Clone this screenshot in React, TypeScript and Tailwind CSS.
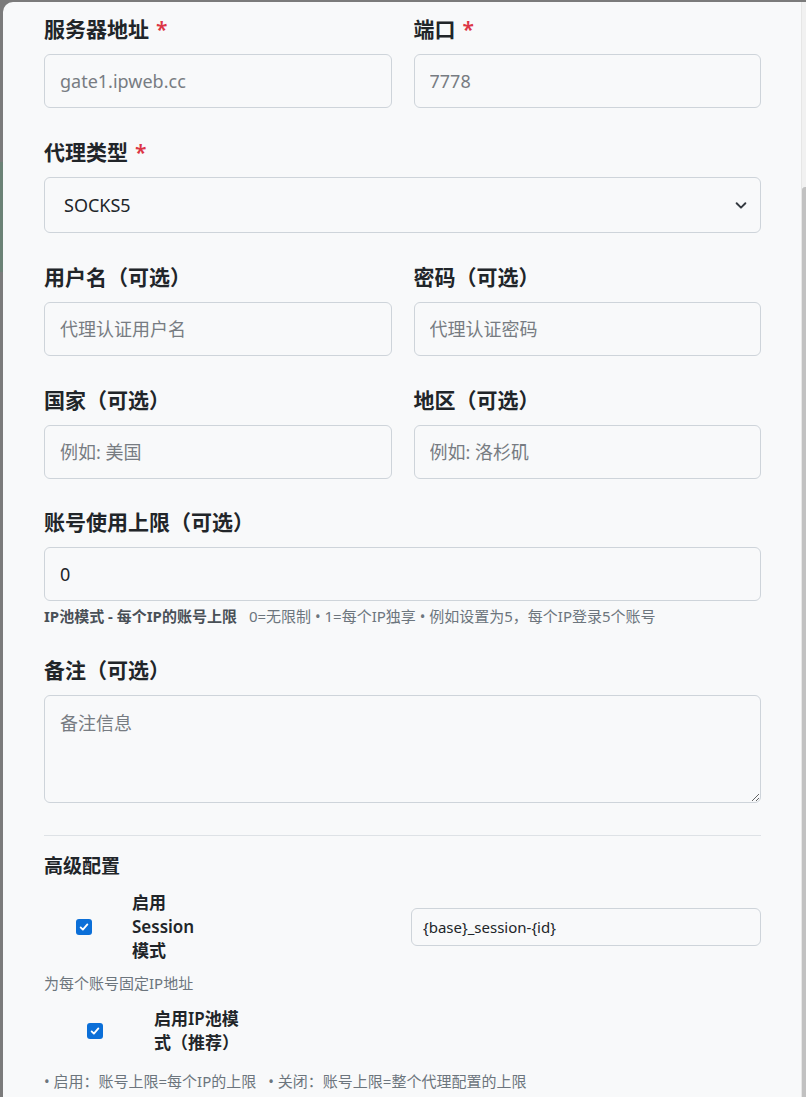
import type { ReactNode } from 'react';

const font = { fontFamily: '"Noto Sans", "Noto Sans CJK SC", sans-serif' };

function Label({ children, required }: { children: ReactNode; required?: boolean }) {
  return (
    <label className="block text-[21px] leading-[30px] font-semibold text-[#212529] mb-[10px]">
      {children}
      {required && <span className="text-[#dc3545] ml-[7px]">*</span>}
    </label>
  );
}

function TextInput({ placeholder, value }: { placeholder?: string; value?: string }) {
  return (
    <input
      type="text"
      placeholder={placeholder}
      defaultValue={value}
      className="block w-full h-[54px] px-[15px] rounded-[6px] border border-[#ced4da] bg-[#f8f9fa] text-[18px] text-[#212529] placeholder:text-[#777c82] outline-none"
    />
  );
}

function Check() {
  return (
    <span className="flex items-center justify-center w-[16px] h-[16px] rounded-[3px] bg-[#0b6fd8] shrink-0">
      <svg viewBox="0 0 16 16" className="w-[12px] h-[12px]" fill="none" stroke="white" strokeWidth={2.4} strokeLinecap="round" strokeLinejoin="round">
        <path d="M3.5 8.5l3 3 6-7" />
      </svg>
    </span>
  );
}

export default function App() {
  return (
    <div className="h-screen overflow-hidden bg-[#7b7b7b] pt-[2px] flex" style={font}>
      <div className="w-[3px] flex flex-col shrink-0">
        <div className="h-[160px]" />
        <div className="h-[110px] bg-[#6b8276]" />
      </div>
      <div className="flex-1 flex bg-[#f8f9fa] rounded-tl-[10px]">
        <div className="flex-1 pl-[41px] pr-[40px] pt-[12px]">
          <div className="grid grid-cols-2 gap-x-[22px]">
            <div>
              <Label required>服务器地址</Label>
              <TextInput placeholder="gate1.ipweb.cc" />
            </div>
            <div>
              <Label required>端口</Label>
              <TextInput placeholder="7778" />
            </div>
          </div>

          <div className="mt-[29px]">
            <Label required>代理类型</Label>
            <div className="relative h-[56px] rounded-[6px] border border-[#ced4da] flex items-center pl-[19px] pr-[12px]">
              <span className="flex-1 text-[18px] text-[#212529]">SOCKS5</span>
              <svg viewBox="0 0 16 16" className="w-[14px] h-[14px]" fill="none" stroke="#343a40" strokeWidth={2.2} strokeLinecap="round" strokeLinejoin="round">
                <path d="M3 6l5 5 5-5" />
              </svg>
            </div>
          </div>

          <div className="grid grid-cols-2 gap-x-[22px] mt-[29px]">
            <div>
              <Label>用户名（可选）</Label>
              <TextInput placeholder="代理认证用户名" />
            </div>
            <div>
              <Label>密码（可选）</Label>
              <TextInput placeholder="代理认证密码" />
            </div>
          </div>

          <div className="grid grid-cols-2 gap-x-[22px] mt-[29px]">
            <div>
              <Label>国家（可选）</Label>
              <TextInput placeholder="例如: 美国" />
            </div>
            <div>
              <Label>地区（可选）</Label>
              <TextInput placeholder="例如: 洛杉矶" />
            </div>
          </div>

          <div className="mt-[28px]">
            <Label>账号使用上限（可选）</Label>
            <TextInput value="0" />
            <p className="mt-[4px] text-[15px] leading-[22px] text-[#6c757d]">
              <span className="font-bold text-[#495057]">IP池模式 - 每个IP的账号上限</span>
              <span className="ml-[12px]">0=无限制 • 1=每个IP独享 • 例如设置为5，每个IP登录5个账号</span>
            </p>
          </div>

          <div className="mt-[28px]">
            <Label>备注（可选）</Label>
            <textarea
              placeholder="备注信息"
              className="block w-full h-[108px] px-[15px] py-[14px] rounded-[6px] border border-[#ced4da] bg-[#f8f9fa] text-[18px] text-[#212529] placeholder:text-[#777c82] outline-none"
            />
          </div>

          <hr className="mt-[32px] border-t border-[#dee2e6]" />

          <h6 className="mt-[17px] text-[19px] leading-[27px] font-bold text-[#212529]">高级配置</h6>

          <div className="mt-[11px] flex items-center">
            <div className="w-[367px] flex items-center">
              <div className="ml-[32px]">
                <Check />
              </div>
              <span className="ml-[40px] w-[66px] text-[17px] leading-[24px] font-semibold text-[#212529]">
                启用 Session 模式
              </span>
            </div>
            <input
              type="text"
              defaultValue="{base}_session-{id}"
              className="flex-1 h-[38px] px-[11px] rounded-[6px] border border-[#ced4da] bg-[#f8f9fa] text-[15px] text-[#212529] outline-none"
            />
          </div>

          <p className="mt-[10px] text-[15px] leading-[21px] text-[#6c757d]">为每个账号固定IP地址</p>

          <div className="mt-[13px] flex items-center">
            <div className="ml-[43px]">
              <Check />
            </div>
            <span className="ml-[51px] w-[88px] text-[17px] leading-[24px] font-semibold text-[#212529]">
              启用IP池模式（推荐）
            </span>
          </div>

          <p className="mt-[16px] text-[15px] leading-[21px] text-[#6c757d]">
            <span>• 启用：账号上限=每个IP的上限</span>
            <span className="ml-[12px]">• 关闭：账号上限=整个代理配置的上限</span>
          </p>
        </div>
        <div className="w-[5px] flex flex-col shrink-0 border-l border-[#e6e6e6]">
          <div className="h-[185px] bg-[#f1f1f1]" />
          <div className="flex-1 bg-[#c1c1c1] rounded-tl-[3px]" />
        </div>
      </div>
    </div>
  );
}
